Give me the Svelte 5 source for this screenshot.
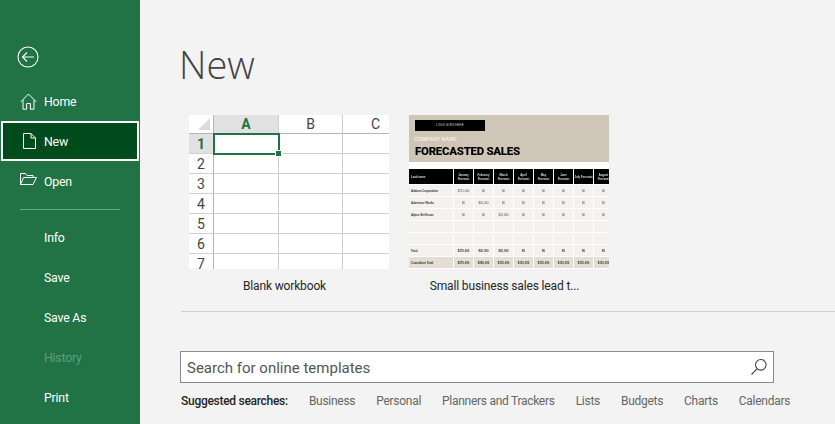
<script>
  const topItems = [
    { label: "Home", icon: "home" },
    { label: "New", icon: "new", active: true },
    { label: "Open", icon: "open" }
  ];
  const lowerItems = [
    { label: "Info" },
    { label: "Save" },
    { label: "Save As" },
    { label: "History", disabled: true },
    { label: "Print" }
  ];
  const searches = ["Business", "Personal", "Planners and Trackers", "Lists", "Budgets", "Charts", "Calendars"];
  const rowNums = [1, 2, 3, 4, 5, 6, 7];
  const months = ["January Forecast", "February Forecast", "March Forecast", "April Forecast", "May Forecast", "June Forecast", "July Forecast", "August Forecast"];
  const leads = [
    { name: "Adatum Corporation", vals: ["$275,000", "$0", "$0", "$0", "$0", "$0", "$0", "$0"] },
    { name: "Adventure Works", vals: ["$0", "$20,000", "$0", "$0", "$0", "$0", "$0", "$0"] },
    { name: "Alpine Ski House", vals: ["$0", "$0", "$20,000", "$0", "$0", "$0", "$0", "$0"] },
    { name: "", vals: ["", "", "", "", "", "", "", ""] },
    { name: "", vals: ["", "", "", "", "", "", "", ""] },
    { name: "Total", vals: ["$275,000", "$20,000", "$20,000", "$0", "$0", "$0", "$0", "$0"], bold: true },
    { name: "Cumulative Total", vals: ["$275,000", "$295,000", "$315,000", "$315,000", "$315,000", "$315,000", "$315,000", "$315,000"], bold: true, cumulative: true }
  ];
</script>

<div class="app">
  <aside class="side">
    <button class="back" aria-label="Back">
      <svg width="22" height="22" viewBox="0 0 22 22" fill="none" stroke="#fff" stroke-width="1.1">
        <circle cx="11" cy="11" r="10" />
        <path d="M5.5 11H17M10 6.5L5.5 11l4.5 4.5" />
      </svg>
    </button>
    {#each topItems as item}
      <div class="item" class:active={item.active}>
        <span class="ico">
          {#if item.icon === "home"}
            <svg width="17" height="17" viewBox="0 0 17 17" fill="none" stroke="#fff" stroke-width="1">
              <path d="M.8 8.800L8.500 1l7.700 7.800M3 7v9.200h3.600v-5.700h3.800v5.700H14V7" />
            </svg>
          {:else if item.icon === "new"}
            <svg width="13" height="16" viewBox="0 0 13 16" fill="none" stroke="#fff" stroke-width="1">
              <path d="M.5.5h7.500l4.500 4.500v10.500H.5zM8 .5V5h4.500" />
            </svg>
          {:else}
            <svg width="17" height="12" viewBox="0 0 17 12" fill="none" stroke="#fff" stroke-width="1">
              <path d="M.5 11.500V.5h5l1.500 2h6v2M.5 11.500L3.500 4.500h13L13 11.500z" />
            </svg>
          {/if}
        </span>
        <span class="label">{item.label}</span>
      </div>
    {/each}
    <div class="divider"></div>
    {#each lowerItems as item}
      <div class="item" class:disabled={item.disabled}>
        <span class="label">{item.label}</span>
      </div>
    {/each}
  </aside>

  <main class="main">
    <h1>New</h1>

    <div class="templates">
      <div class="tpl">
        <div class="thumb sheet">
          <div class="hdr corner"><span class="tri"></span></div>
          <div class="hdr col sel">A</div>
          <div class="hdr col b">B</div>
          <div class="hdr col c">C</div>
          {#each rowNums as n}
            <div class="hdr rownum" class:sel={n === 1}>{n}</div>
            <div class="cell" class:current={n === 1}>
              {#if n === 1}<span class="handle"></span>{/if}
            </div>
            <div class="cell"></div>
            <div class="cell last"></div>
          {/each}
        </div>
        <div class="caption">Blank workbook</div>
      </div>

      <div class="tpl">
        <div class="thumb forecast">
          <div class="banner">
            <div class="logo">LOGO GOES HERE</div>
            <div class="company">COMPANY NAME</div>
            <div class="title">FORECASTED SALES</div>
          </div>
          <div class="table">
            <div class="head first">Lead name</div>
            {#each months as m}<div class="head" class:oneline={m.startsWith("July")}>{m}</div>{/each}
            {#each leads as lead}
              <div class="td first" class:bold={lead.bold} class:cum={lead.cumulative}>{lead.name}</div>
              {#each lead.vals as v}
                <div class="td" class:bold={lead.bold} class:cum={lead.cumulative}>{v}</div>
              {/each}
            {/each}
          </div>
        </div>
        <div class="caption">Small business sales lead t...</div>
      </div>
    </div>

    <div class="rule"></div>

    <div class="search">
      <span class="placeholder">Search for online templates</span>
      <svg width="18" height="18" viewBox="0 0 18 18" fill="none" stroke="#444" stroke-width="1.100">
        <circle cx="10.800" cy="6.800" r="5.300" />
        <path d="M7 10.800L1.500 16.500" />
      </svg>
    </div>

    <div class="suggested">
      <strong>Suggested searches:</strong>
      {#each searches as s}<span>{s}</span>{/each}
    </div>
  </main>
</div>

<style>
  :global(body) {
    margin: 0;
    background: #f3f3f3;
  }

  .app {
    display: flex;
    width: 835px;
    height: 424px;
    overflow: hidden;
    font-family: Roboto, "Open Sans", sans-serif;
  }

  .side {
    width: 140px;
    flex: none;
    background: #217346;
    color: #fff;
    font-size: 12.300px;
    letter-spacing: -0.2px;
    padding-top: 46px;
    box-sizing: border-box;
  }

  .back {
    display: block;
    width: 22px;
    height: 22px;
    padding: 0;
    margin: 0 0 13px 17px;
    border: 0;
    background: none;
  }

  .back svg { display: block; }

  .item {
    height: 40px;
    display: flex;
    align-items: center;
    padding-left: 44px;
    box-sizing: border-box;
    position: relative;
  }

  .label { padding-top: 2px; }

  .item.active {
    width: 138px;
    margin-left: 1px;
    background: #004b1c;
    border: 2px solid #fff;
    padding-left: 41px;
  }

  .item.disabled {
    color: #5f9e7c;
  }

  .ico {
    position: absolute;
    left: 20px;
    top: 12px;
    width: 17px;
    display: flex;
    justify-content: center;
  }

  .active .ico {
    left: 17px;
    top: 10px;
    width: 19px;
  }

  .divider {
    width: 100px;
    height: 1px;
    margin: 8px 0 7px 20px;
    background: #6ba588;
  }

  .main {
    flex: 1;
    padding: 0 0 0 41px;
    min-width: 0;
    color: #444;
  }

  h1 {
    margin: 37px 0 0 -2px;
    height: 78px;
    font-family: "Open Sans", sans-serif;
    font-size: 38px;
    font-weight: 300;
    line-height: 54px;
    color: #444;
  }

  .templates {
    display: flex;
    gap: 20px;
    margin-left: 8px;
  }

  .tpl { width: 200px; }

  .thumb {
    width: 200px;
    height: 154px;
    overflow: hidden;
    background: #fff;
  }

  .caption {
    margin-top: 8px;
    padding-right: 9px;
    box-sizing: border-box;
    text-align: center;
    font-size: 12px;
    letter-spacing: -0.15px;
    line-height: 18px;
    color: #262626;
    white-space: nowrap;
  }

  .sheet {
    display: grid;
    grid-template-columns: 25px 65px 64px 46px;
    grid-template-rows: 19px repeat(7, 20px);
    color: #444;
  }

  .hdr {
    box-sizing: border-box;
    font-size: 14px;
    display: flex;
    align-items: center;
    justify-content: center;
    background: #fff;
  }

  .corner {
    position: relative;
    border-right: 1px solid #b5b5b5;
    border-bottom: 1px solid #b5b5b5;
  }

  .tri {
    position: absolute;
    right: 3px;
    bottom: 3px;
    width: 0;
    height: 0;
    border-left: 12px solid transparent;
    border-bottom: 12px solid #dcdcdc;
  }

  .col {
    border-right: 1px solid #d0d0d0;
    border-bottom: 1px solid #b5b5b5;
  }

  .col.c {
    border-right: 0;
    padding-left: 19px;
  }

  .rownum {
    border-right: 1px solid #b5b5b5;
    border-bottom: 1px solid #d0d0d0;
  }

  .hdr.sel {
    background: #e1e1e1;
    color: #217346;
    font-weight: 700;
  }

  .cell {
    box-sizing: border-box;
    position: relative;
    border-right: 1px solid #d0d0d0;
    border-bottom: 1px solid #d0d0d0;
  }

  .cell.last { border-right: 0; }

  .current {
    outline: 2px solid #217346;
    outline-offset: -1px;
    z-index: 1;
  }

  .handle {
    position: absolute;
    right: -3px;
    bottom: -3px;
    width: 5px;
    height: 5px;
    background: #217346;
    outline: 1px solid #fff;
  }

  .forecast {
    filter: blur(0.3px);
  }

  .banner {
    height: 47px;
    background: #cfc6b8;
    box-sizing: border-box;
    padding: 5px 0 0 6px;
  }

  .logo {
    width: 70px;
    height: 11px;
    background: #000;
    color: #ccc;
    font-family: "Liberation Sans", sans-serif;
    font-size: 3px;
    line-height: 11px;
    text-align: center;
  }

  .company {
    margin: 5px 0 0 -1px;
    font-family: "Liberation Sans", sans-serif;
    font-size: 5.200px;
    font-weight: 700;
    line-height: 7px;
    color: #f3efe6;
  }

  .title {
    margin-top: 1px;
    font-family: Roboto, sans-serif;
    font-size: 11.500px;
    letter-spacing: -0.3px;
    font-weight: 900;
    line-height: 14px;
    color: #000;
    white-space: nowrap;
  }

  .table {
    margin-top: 7px;
    display: grid;
    grid-template-columns: 44px repeat(8, 19px);
    grid-template-rows: 15px repeat(7, 11px);
    gap: 1px;
    font-family: "Liberation Sans", sans-serif;
    font-size: 2.800px;
    text-align: center;
    width: 240px;
  }

  .head {
    background: #000;
    color: #ddd;
    font-weight: 700;
    display: flex;
    align-items: center;
    justify-content: center;
    line-height: 4px;
    padding: 0 3px;
  }

  .head.oneline {
    padding: 0;
    white-space: nowrap;
  }

  .td {
    background: #f3f2ee;
    color: #555;
    display: flex;
    align-items: center;
    justify-content: center;
  }

  .first {
    justify-content: flex-start;
    padding-left: 2px;
    font-weight: 700;
    color: #333;
  }

  .head.first {
    color: #ddd;
    padding: 0 0 0 2px;
  }

  .bold {
    font-weight: 700;
    color: #333;
  }

  .cum { background: #e3ddd3; }

  .rule {
    height: 1px;
    margin-top: 16px;
    background: #cfcfcf;
  }

  .search {
    width: 594px;
    height: 32px;
    margin: 39px 0 0 -1px;
    box-sizing: border-box;
    border: 1px solid #8a8a8a;
    background: #fff;
    display: flex;
    align-items: center;
    justify-content: space-between;
    padding: 0 5px 0 6px;
    font-size: 15px;
    color: #555;
  }

  .placeholder { padding-top: 2px; }

  .suggested {
    display: flex;
    align-items: center;
    gap: 21px;
    margin-top: 10px;
    font-size: 12px;
    letter-spacing: -0.28px;
    line-height: 17px;
    color: #666;
    white-space: nowrap;
  }

  .suggested strong {
    font-weight: 500;
    color: #262626;
  }
</style>
